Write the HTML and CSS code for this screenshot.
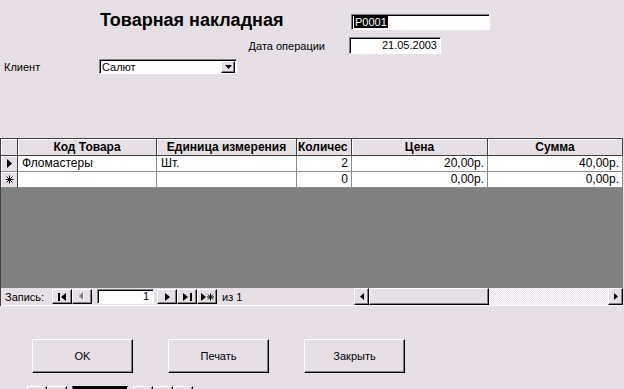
FILE: index.html
```html
<!DOCTYPE html>
<html>
<head>
  <meta charset="utf-8">
  <title>Товарная накладная</title>
  <link rel="stylesheet" href="styles.css">
</head>
<body>
  <div class="form">
    <div class="head-row">
      <h1 class="title">Товарная накладная</h1>
      <div class="field field-number"><span class="selected">Р0001</span></div>
    </div>

    <div class="date-row">
      <span class="date-label">Дата операции</span>
      <div class="field field-date">21.05.2003</div>
    </div>

    <div class="client-row">
      <span class="client-label">Клиент</span>
      <div class="field combo">
        <span class="combo-text">Салют</span>
        <span class="raised combo-btn">
          <svg width="7" height="4" viewBox="0 0 7 4"><polygon points="0,0 7,0 3.5,4" fill="#000"/></svg>
        </span>
      </div>
    </div>

    <div class="datasheet">
      <table class="sheet">
        <colgroup>
          <col style="width:17px">
          <col style="width:139px">
          <col style="width:140px">
          <col style="width:55px">
          <col style="width:136px">
          <col style="width:135px">
        </colgroup>
        <thead>
          <tr>
            <th class="selector"></th>
            <th>Код Товара</th>
            <th>Единица измерения</th>
            <th class="clipped">Количес</th>
            <th>Цена</th>
            <th>Сумма</th>
          </tr>
        </thead>
        <tbody>
          <tr>
            <td class="selector">
              <svg width="5" height="9" viewBox="0 0 5 9"><polygon points="0,0 5,4.5 0,9" fill="#000"/></svg>
            </td>
            <td>Фломастеры</td>
            <td>Шт.</td>
            <td class="num">2</td>
            <td class="num">20,00р.</td>
            <td class="num">40,00р.</td>
          </tr>
          <tr>
            <td class="selector">
              <svg width="9" height="9" viewBox="0 0 9 9" stroke="#000" stroke-width="1"><path d="M4.5 0.5V8.5M0.5 4.5H8.5M1.5 1.5L7.5 7.5M7.5 1.5L1.5 7.5"/></svg>
            </td>
            <td></td>
            <td></td>
            <td class="num">0</td>
            <td class="num">0,00р.</td>
            <td class="num">0,00р.</td>
          </tr>
        </tbody>
      </table>

      <div class="sheet-empty"></div>

      <div class="nav">
        <span class="nav-label">Запись:</span>
        <span class="raised nav-btn">
          <svg width="9" height="8" viewBox="0 0 9 8"><rect x="0" y="0" width="2" height="8" fill="#000"/><polygon points="8,0 8,8 3,4" fill="#000"/></svg>
        </span>
        <span class="raised nav-btn">
          <svg width="6" height="9" viewBox="0 0 6 9"><polygon points="5,1 5,9 1,5" fill="#fff"/><polygon points="4,0 4,8 0,4" fill="#808080"/></svg>
        </span>
        <span class="field nav-input">1</span>
        <span class="raised nav-btn">
          <svg width="5" height="8" viewBox="0 0 5 8"><polygon points="0,0 5,4 0,8" fill="#000"/></svg>
        </span>
        <span class="raised nav-btn">
          <svg width="9" height="8" viewBox="0 0 9 8"><polygon points="0,0 5,4 0,8" fill="#000"/><rect x="7" y="0" width="2" height="8" fill="#000"/></svg>
        </span>
        <span class="raised nav-btn">
          <svg width="13" height="8" viewBox="0 0 13 8"><polygon points="0,0 5,4 0,8" fill="#000"/><path d="M9.5 0.5V7.5M6 4H13M7 1.5L12 6.5M12 1.5L7 6.5" stroke="#000" stroke-width="1"/></svg>
        </span>
        <span class="nav-count">из 1</span>

        <div class="hscroll">
          <span class="raised scroll-btn">
            <svg width="4" height="7" viewBox="0 0 4 7"><polygon points="4,0 4,7 0,3.5" fill="#000"/></svg>
          </span>
          <span class="raised scroll-thumb"></span>
          <span class="scroll-track"></span>
          <span class="raised scroll-btn">
            <svg width="4" height="7" viewBox="0 0 4 7"><polygon points="0,0 4,3.5 0,7" fill="#000"/></svg>
          </span>
        </div>
      </div>
    </div>

    <div class="actions">
      <button class="raised btn">OK</button>
      <button class="raised btn">Печать</button>
      <button class="raised btn">Закрыть</button>
    </div>

    <div class="sub-nav">
      <span class="raised sub-btn"></span>
      <span class="raised sub-btn"></span>
      <span class="field sub-input"></span>
      <span class="raised sub-btn"></span>
      <span class="raised sub-btn"></span>
      <span class="raised sub-btn"></span>
    </div>
  </div>
</body>
</html>
```

FILE: styles.css
```css
body {
  margin: 0;
  background: #e6e0e6;
  font-family: "Liberation Sans", Arial, sans-serif;
  font-size: 11px;
  color: #000;
}

.form {
  width: 624px;
  height: 389px;
  overflow: hidden;
}

/* sunken 3D field */
.field {
  box-sizing: border-box;
  background: #fff;
  border-top: 1px solid #808080;
  border-left: 1px solid #808080;
  border-right: 1px solid #fff;
  border-bottom: 1px solid #fff;
  box-shadow: inset 1px 1px 0 #000;
}

/* raised 3D button */
.raised {
  box-sizing: border-box;
  background: #e6e0e6;
  border-top: 1px solid #fff;
  border-left: 1px solid #fff;
  border-right: 1px solid #000;
  border-bottom: 1px solid #000;
  box-shadow: inset -1px -1px 0 #808080;
  display: flex;
  align-items: center;
  justify-content: center;
}

.head-row {
  display: flex;
  align-items: flex-start;
  padding: 11px 0 0 100px;
  height: 19px;
}

.title {
  width: 251px;
  margin: 0;
  font-size: 18px;
  line-height: 18px;
  font-weight: bold;
}

.field-number {
  width: 139px;
  height: 16px;
  margin-top: 3px;
  padding: 1px 0 0 2px;
  line-height: 12px;
}

.selected {
  background: #000;
  color: #fff;
  padding: 0 1px;
}

.date-row {
  display: flex;
  align-items: center;
  margin-top: 7px;
}

.date-label {
  width: 325px;
  text-align: right;
}

.field-date {
  width: 92px;
  height: 17px;
  margin-left: 24px;
  padding-right: 3px;
  line-height: 15px;
  text-align: right;
}

.client-row {
  display: flex;
  align-items: center;
  margin-top: 5px;
}

.client-label {
  width: 95px;
  padding-left: 4px;
}

.combo {
  width: 138px;
  height: 15px;
  display: flex;
  align-items: center;
  padding: 1px 1px 1px 2px;
}

.combo-text {
  flex: 1;
  line-height: 12px;
}

.combo-btn {
  width: 14px;
  height: 12px;
}

/* datasheet */
.datasheet {
  margin-top: 64px;
  width: 623px;
  border-left: 1px solid #404040;
  box-sizing: border-box;
}

.sheet {
  width: 622px;
  table-layout: fixed;
  border-collapse: separate;
  border-spacing: 0;
  border-top: 1px solid #404040;
  font-size: 12px;
}

.sheet th,
.sheet td {
  padding: 0;
  overflow: hidden;
  white-space: nowrap;
}

.sheet th {
  height: 16px;
  line-height: 16px;
  background: #e6e0e6;
  border-right: 1px solid #404040;
  border-bottom: 1px solid #404040;
  box-shadow: inset 1px 1px 0 #fff;
  font-weight: bold;
  text-align: center;
}

.sheet th.clipped {
  text-align: left;
  padding-left: 1px;
}

.sheet td {
  height: 15px;
  line-height: 15px;
  background: #fff;
  border-right: 1px solid #8c8c8c;
  border-bottom: 1px solid #8c8c8c;
  padding-left: 4px;
}

.sheet td.num {
  text-align: right;
  padding: 0 3px 0 0;
}

.sheet td.selector {
  background: #e6e0e6;
  border-right: 1px solid #404040;
  box-shadow: inset 1px 1px 0 #fff;
  text-align: center;
  padding: 0;
}

.sheet td.selector svg {
  display: block;
  margin: 0 auto;
}

.sheet-empty {
  height: 100px;
  background: #808080;
}

.nav {
  display: flex;
  align-items: center;
  height: 17px;
  border-bottom: 1px solid #fff;
  background: #e6e0e6;
}

.nav-label {
  width: 47px;
  padding-left: 4px;
}

.nav-btn {
  width: 20px;
  height: 15px;
}

.nav-input {
  width: 57px;
  height: 15px;
  margin: 0 3px 0 5px;
  padding-right: 4px;
  line-height: 13px;
  text-align: right;
}

.nav-count {
  margin-left: 5px;
}

.hscroll {
  display: flex;
  margin-left: auto;
  width: 269px;
  height: 17px;
}

.scroll-btn {
  width: 15px;
  height: 17px;
}

.scroll-thumb {
  width: 120px;
  height: 17px;
}

.scroll-track {
  flex: 1;
  background: repeating-conic-gradient(#fff 0 25%, #e6e0e6 0 50%) 0 0 / 2px 2px;
}

/* buttons */
.actions {
  display: flex;
  gap: 35px;
  padding-left: 32px;
  margin-top: 33px;
}

.btn {
  width: 101px;
  height: 34px;
  font-family: "Liberation Sans", Arial, sans-serif;
  font-size: 11px;
  color: #000;
  padding: 0;
}

.sub-nav {
  display: flex;
  padding-left: 27px;
  margin-top: 13px;
}

.sub-btn {
  width: 20px;
  height: 16px;
}

.sub-input {
  width: 56px;
  height: 16px;
  margin: 0 5px;
  border-top: 2px solid #000;
}
```
